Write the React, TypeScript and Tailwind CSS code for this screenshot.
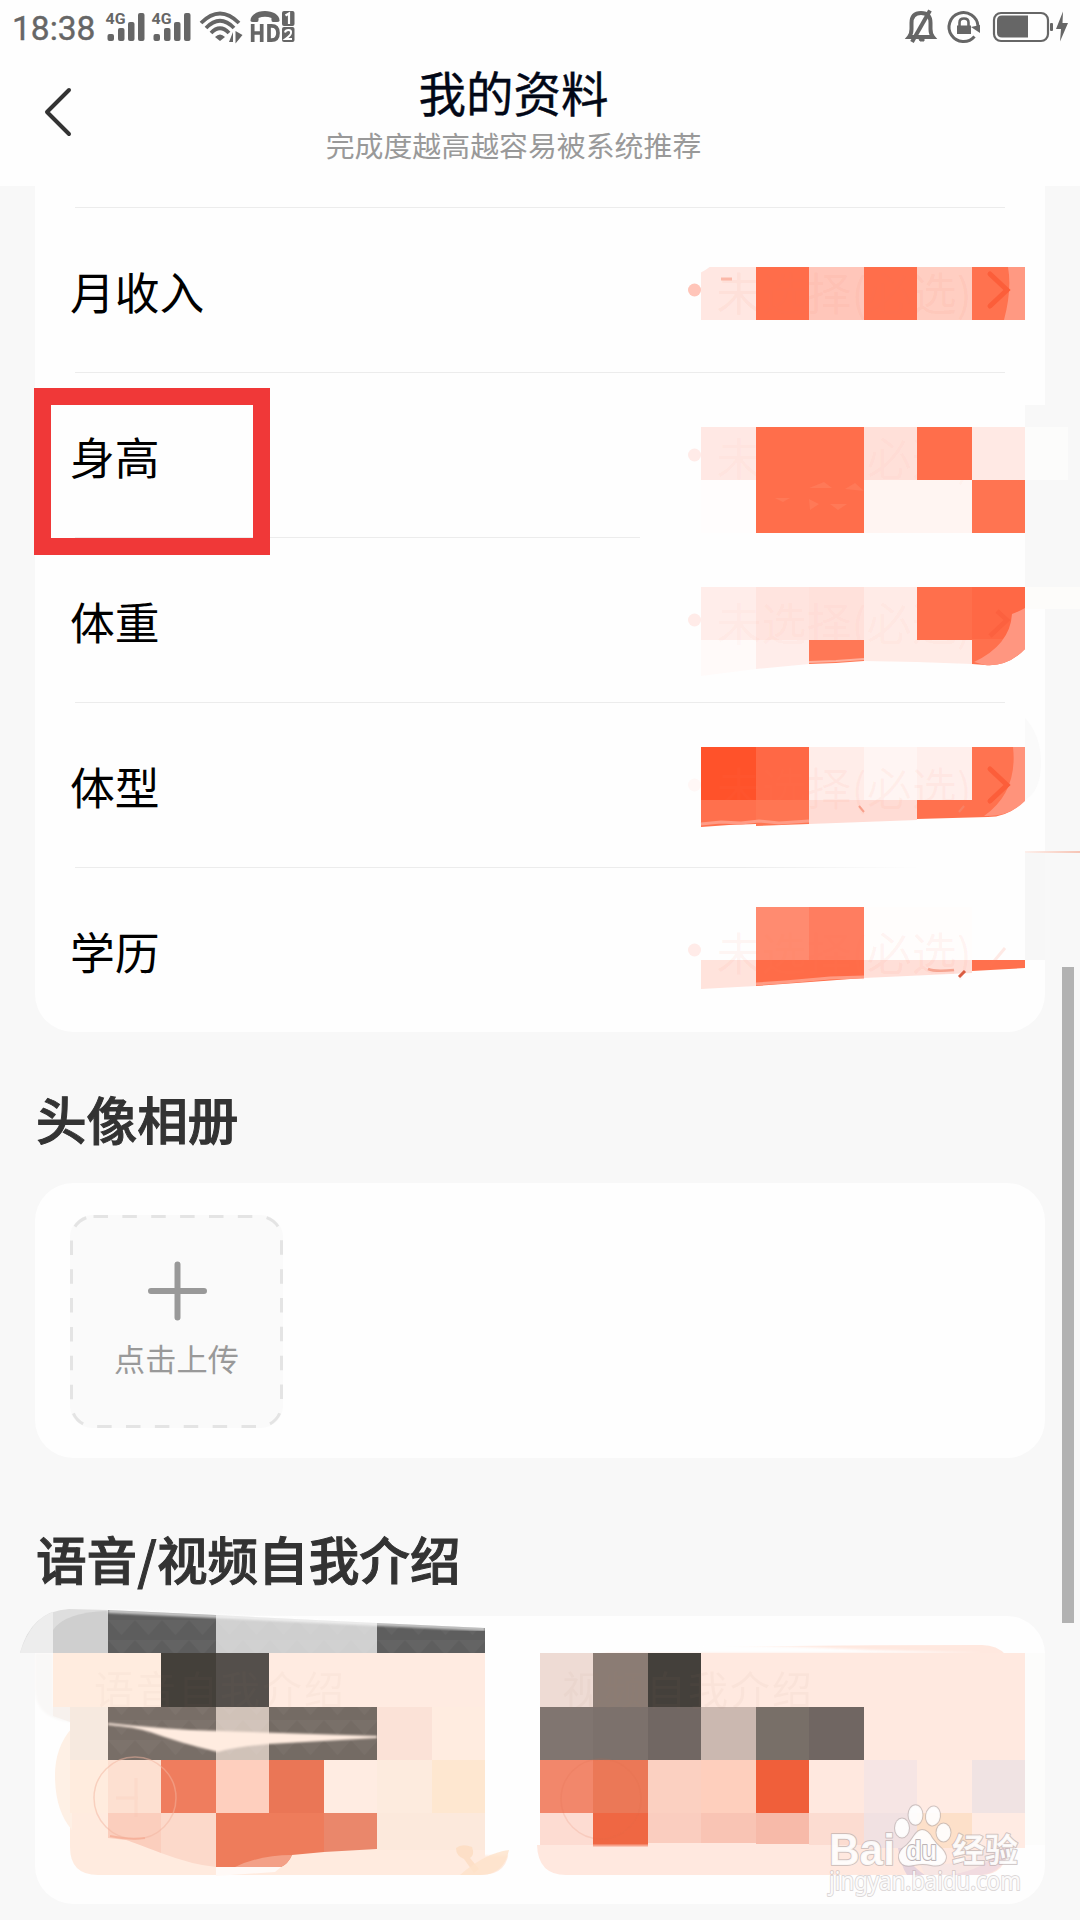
import React from "react";

type Cell = [number, number, number, number, string];

const FONT = "font-['Noto_Sans_CJK_SC','Noto_Sans',sans-serif]";

/* Pixelated cells, given as left, top, right, bottom and colour in page units. */
function Cells({ cells }: { cells: Cell[] }) {
  return (
    <>
      {cells.map(([l, t, r, b, c], i) => (
        <rect key={i} x={l} y={t} width={r - l} height={b - t} fill={c} />
      ))}
    </>
  );
}

function Signal() {
  return (
    <svg width="40" height="32" viewBox="105 11 40 32" fill="#666">
      <text x="105.5" y="24" fontSize="14.500" fontWeight="700" fontFamily="Roboto, sans-serif" textLength="20" lengthAdjust="spacingAndGlyphs">4G</text>
      <rect x="107.5" y="34" width="6.5" height="7" rx="2" />
      <rect x="118" y="28" width="6.5" height="13" rx="2" />
      <rect x="128" y="22" width="6.5" height="19" rx="2" />
      <rect x="138" y="13" width="6.5" height="28" rx="2" />
    </svg>
  );
}

function StatusBar() {
  return (
    <div className="flex h-14 items-start justify-between text-[#666]">
      <div className="flex items-start">
        <span className="ml-3 mt-[9px] w-[93px] text-[33.5px] leading-10 font-['Roboto'] [-webkit-text-stroke:0.4px_#666]">18:38</span>
        <div className="mt-[11px] flex gap-1.5">
          <Signal />
          <Signal />
        </div>
        <svg className="ml-2 mt-[10px]" width="45" height="34" viewBox="199 10 45 34" fill="none" stroke="#666" strokeWidth="3.8">
          <path d="M201 23 Q220 4 239 23" />
          <path d="M206 28 Q220 13.500 234 28" />
          <path d="M211 33 Q220 23.500 229 33" />
          <path d="M215 37 Q220 32 225 37 L220 41Z" fill="#666" stroke="none" />
          <path d="M229 42 L233 42 V32Z M235.500 31 V43.500 L242.500 35Z" fill="#666" stroke="none" />
        </svg>
        <svg className="ml-1.5 mt-[10px]" width="45" height="34" viewBox="250 10 45 34" fill="#666">
          <path d="M250.500 21 C250 15 257 11 265 11 S280 15 279.500 21 Q279 22 277 22 H273 Q271 22 271.500 18 Q265 15.500 258.500 18 Q259 22 257 22 H253 Q251 22 250.500 21Z" />
          <path d="M252.700 24 V42 M261.700 24 V42 M252.700 33 H261.700 M269 25.800 V40.200 H271.500 Q278 40.200 278 33 T271.500 25.800 Z" fill="none" stroke="#666" strokeWidth="3.700" />
          <rect x="282" y="11" width="12.500" height="15" rx="2" />
          <rect x="282" y="27" width="12.500" height="15" rx="2" />
          <path d="M285.500 15.500 L289 13.500 V24" fill="none" stroke="#fff" strokeWidth="2.200" />
          <path d="M285 32.500 Q285.500 30 288.500 30 T291 33 Q291 35 285.500 39 H292" fill="none" stroke="#fff" strokeWidth="2" />
        </svg>
      </div>
      <svg className="mr-2 mt-[9px]" width="168" height="36" viewBox="904 9 168 36" fill="none" stroke="#666">
        <path d="M909 37 H933 Q930.500 34 930.500 29 V23 Q930.500 13 921 13 T911.500 23 V29 Q911.500 34 909 37Z" strokeWidth="4" />
        <path d="M930 10.500 L912 42" strokeWidth="4" />
        <path d="M919 39 h5 v2 h-4z" fill="#666" strokeWidth="1" />
        <path d="M974.500 36.500 A14.500 14.500 0 1 1 978 26" strokeWidth="3" />
        <path d="M971 27 L980 25 V33Z" fill="#666" stroke="none" />
        <rect x="957" y="25.500" width="14" height="8.500" fill="#666" stroke="none" />
        <path d="M959.500 26 V22.500 Q959.500 18.500 964 18.500 T968.500 22.500 V26" strokeWidth="2.600" />
        <rect x="994" y="13" width="54" height="28" rx="7" strokeWidth="2.200" />
        <path d="M1002 15.500 H1028 V37.500 H1002 Q997 37.500 997 32.500 V20.500 Q997 15.500 1002 15.500Z" fill="#666" stroke="none" />
        <rect x="1050" y="23" width="3" height="8" rx="1" fill="#666" stroke="none" />
        <path d="M1063 11.500 L1056 29 H1061 L1060 41.500 L1068 23 H1062.500Z" fill="#666" stroke="none" />
      </svg>
    </div>
  );
}

function Header() {
  return (
    <header className="h-[186px] bg-[#fefefe]">
      <StatusBar />
      <div className="flex items-start">
        <svg className="ml-[43px] mt-[30px] shrink-0" width="30" height="52" viewBox="43 86 30 52" fill="none" stroke="#333" strokeWidth="4" strokeLinecap="round" strokeLinejoin="round">
          <path d="M69 90 L47 112 L69 134" />
        </svg>
        <div className="ml-[200px] flex w-[481px] flex-col items-center pt-2.5">
          <h1 className="text-[47.5px] leading-[52px] text-[#020817] [-webkit-text-stroke:0.4px_#020817]">我的资料</h1>
          <p className="mt-2 text-[28.900px] leading-9 text-[#999]">完成度越高越容易被系统推荐</p>
        </div>
      </div>
    </header>
  );
}

interface RowProps {
  label: string;
  top: number;
  dot: string;
  cells: Cell[];
  valueClass: string;
  last?: boolean;
  children?: React.ReactNode;
}

function Row({ label, top, dot, cells, valueClass, last, children }: RowProps) {
  return (
    <div className="relative mx-10 flex h-[165px] items-center justify-between">
      <span className="-ml-[5px] pt-0.5 text-[44.800px] leading-none text-black">{label}</span>
      <svg className="pointer-events-none absolute -left-[75px] top-0 overflow-visible" width="1080" height="165" viewBox={`0 ${top} 1080 165`}>
        <circle cx="694.5" cy={top + 82} r="6.500" fill={dot} />
        <Cells cells={cells} />
        {children}
      </svg>
      <span className={`relative mr-[33px] pt-0.5 text-[45px] leading-none ${valueClass}`}>未选择(必选)</span>
      {!last && <i className="absolute inset-x-0 bottom-0 h-px bg-[#ececec]" />}
    </div>
  );
}

function Arrow({ y, color }: { y: number; color: string }) {
  return <path d={`M990 ${y - 16} L1007 ${y} L990 ${y + 16}`} fill="none" stroke={color} strokeWidth="5" strokeLinecap="round" />;
}

function ProfileCard() {
  return (
    <section className="relative mx-[35px] h-[846px] rounded-b-[38px] bg-[#fefefe] pt-[22px]">
      <i className="absolute inset-x-10 top-[21px] h-px bg-[#ececec]" />
      <Row
        label="月收入" top={208} dot="#ffc5b9" valueClass="text-[#f97b5b]/8"
        cells={[[701, 267, 756, 320, "#ffe7e2"], [756, 267, 809, 320, "#ff6d4a"], [809, 267, 864, 320, "#ffc6ba"], [864, 267, 917, 320, "#ff6e4b"], [917, 267, 972, 320, "#ffcec2"], [972, 267, 1025, 320, "#ff724f"]]}
      >
        <path d="M1008 267 H1025 V320 H1004 Q1012 290 1008 267Z" fill="#ff9982" />
        <path d="M700 266 H711 Q706 270 700 273Z" fill="#fefefe" />
        <path d="M721 279 H732" stroke="#fbb8a8" strokeWidth="3" />
        <Arrow y={290} color="#fc5e3a" />
      </Row>
      <Row
        label="身高" top={373} dot="#ffebe8" valueClass="text-[#ff7c5c]/4"
        cells={[[1025, 405, 1045, 587, "#f8f8f8"], [1025, 427, 1068, 480, "#fcfcfb"], [701, 427, 756, 480, "#ffe8e4"], [756, 427, 864, 533, "#ff6e4b"], [864, 427, 917, 480, "#ffe0d9"], [917, 427, 972, 480, "#ff6e4b"], [972, 427, 1025, 480, "#ffe9e4"], [701, 480, 756, 533, "#fffdfd"], [864, 480, 972, 533, "#fff5f2"], [972, 480, 1025, 533, "#ff7451"]]}
      >
        <path d="M809 488 l15-6 8 6z M845 489 l10-6 9 8z M809 499 l10 5-9 6z M830 504 l8 6 9-6z M775 498 l8 4 7-4z" fill="#ff8363" opacity=".5" />
      </Row>
      <Row
        label="体重" top={538} dot="#ffebe8" valueClass="text-[#ff7c5c]/5"
        cells={[[640, 537, 1005, 538, "#fefefe"], [1025, 587, 1080, 609, "#fdfcfa"], [701, 587, 756, 640, "#ffedea"], [756, 587, 809, 640, "#ffe4df"], [809, 587, 864, 640, "#ffe1db"], [864, 587, 917, 640, "#ffebe7"], [917, 587, 972, 640, "#ff6f4c"], [972, 587, 1025, 640, "#ff6845"]]}
      >
        <rect x="640" y="536" width="370" height="3" fill="#fefefe" />
        <path d="M701 640 H756 V669 L701 676Z" fill="#fffaf9" />
        <path d="M756 640 H809 V664 L756 669Z" fill="#ffedea" />
        <path d="M809 640 H864 V661 L836 663 L809 664Z" fill="#ff7856" />
        <path d="M809 662 L836 661 L864 659" stroke="#ffb09d" strokeWidth="2" fill="none" />
        <path d="M864 640 H972 V664 L917 662 L864 661Z" fill="#ffebe6" />
        <path d="M972 639 H1025 V649 Q1008 667 985 665 L972 664Z" fill="#ff704d" />
        <path d="M1012 614 Q1020 611 1025 608 V649 Q1008 667 985 665 L974 662 Q1010 645 1012 614Z" fill="#ff9680" />
        <path d="M997 611 L1007 620 L990 636" fill="none" stroke="#fc613f" strokeWidth="4.500" />
      </Row>
      <Row
        label="体型" top={703} dot="#fff7f6" valueClass="text-[#ff7c5c]/6"
        cells={[[701, 747, 756, 800, "#ff522a"], [756, 747, 809, 800, "#ff6845"], [809, 747, 864, 800, "#ffede9"], [864, 747, 917, 800, "#fff5f3"], [917, 747, 972, 800, "#ffefec"], [972, 747, 1025, 800, "#ff7350"]]}
      >
        <path d="M1025 718 Q1041 735 1041 763 T1025 800Z" fill="#fafafa" />
        <path d="M701 800 H756 V824 L729 825 L701 827Z" fill="#ff704d" />
        <path d="M756 800 H809 V824 L782 825 L756 826Z" fill="#ff7653" />
        <path d="M701 824 l20-2 20 1 18-2 20 2 30-2" fill="none" stroke="#ff9b85" strokeWidth="3" />
        <path d="M809 800 H917 V820 L809 824Z" fill="#ffdcd5" />
        <path d="M917 800 H1025 Q1009 817 988 817 L917 819Z" fill="#ff714e" />
        <path d="M1013 747 H1025 V801 Q1009 817 984 816 Q1018 792 1013 747Z" fill="#ff937b" />
        <path d="M859 806 L864 812 M964 806 L959 812" stroke="#f58a70" strokeWidth="2" opacity=".7" />
        <Arrow y={785} color="#fc5e3a" />
      </Row>
      <Row
        label="学历" top={868} dot="#ffebe8" valueClass="text-[#ff7c5c]/7" last
        cells={[[1025, 852, 1045, 960, "#f7f7f7"], [756, 907, 809, 960, "#ff8b70"], [809, 907, 864, 960, "#ff7d60"], [864, 907, 972, 960, "#fffdfc"]]}
      >
        <defs>
          <linearGradient id="fadeLine"><stop offset="0" stopColor="#fdf0ec" /><stop offset="1" stopColor="#f6c4b5" /></linearGradient>
          <linearGradient id="fadeRule"><stop offset="0" stopColor="#fefefe" stopOpacity="0" /><stop offset="1" stopColor="#fefefe" /></linearGradient>
        </defs>
        <rect x="740" y="866" width="180" height="3" fill="url(#fadeRule)" />
        <rect x="920" y="866" width="90" height="3" fill="#fefefe" />
        <rect x="1025" y="851" width="55" height="2" fill="url(#fadeLine)" />
        <path d="M701 960 H756 V986 L701 989Z" fill="#ffe3dc" />
        <path d="M756 960 H864 V978 L810 982 L756 986Z" fill="#ff6c48" />
        <path d="M756 984 L785 982 L830 978 L864 977" fill="none" stroke="#ff9b83" strokeWidth="3" />
        <path d="M864 960 H972 V973 L864 978Z" fill="#ffdfd8" />
        <path d="M972 960 H1025 V968 L972 971Z" fill="#ff704d" />
        <path d="M1005 948 L990 966" stroke="#ff795a" strokeWidth="3" opacity=".15" />
        <path d="M928 969 Q935 972 954 970" fill="none" stroke="#f6a693" strokeWidth="2.500" />
        <path d="M965 971 L959 977" stroke="#d85a40" strokeWidth="3" />
      </Row>
      <div className="absolute -left-px top-[202px] h-[167px] w-[236px] border-[17.5px] border-[#f03838]" />
    </section>
  );
}

function UploadBox() {
  return (
    <div className="relative flex size-[213px] flex-col items-center rounded-[22px] bg-[#fafafa] pt-[46px]">
      <svg className="absolute inset-0" width="213" height="213" fill="none" stroke="#e4e4e4" strokeWidth="3">
        <rect x="1.500" y="1.500" width="210" height="210" rx="22" strokeDasharray="14.500 14.370" />
      </svg>
      <svg width="60" height="60" viewBox="0 0 60 60" stroke="#999" strokeWidth="6" strokeLinecap="round">
        <path d="M30.500 3.500 V56.500 M4 30 H57" />
      </svg>
      <span className="mt-[19px] text-[31.200px] leading-9 text-[#999]">点击上传</span>
    </div>
  );
}

function VoiceArt() {
  const cells: Cell[] = [
    [53, 1653, 108, 1707, "#ffecdf"], [108, 1653, 161, 1707, "#ffecdf"], [161, 1653, 216, 1707, "#44403a"], [216, 1653, 269, 1707, "#544f4b"], [269, 1653, 485, 1707, "#ffebe1"],
    [70, 1707, 108, 1760, "#f6e9df"], [108, 1707, 216, 1760, "#786e67"], [216, 1707, 269, 1760, "#d0c2b8"], [269, 1707, 377, 1760, "#746b64"], [377, 1707, 432, 1760, "#fbe2d7"], [432, 1707, 485, 1760, "#ffece0"],
    [70, 1760, 108, 1813, "#ffecde"], [108, 1760, 161, 1813, "#fde0d1"], [161, 1760, 216, 1813, "#ef7d5e"], [216, 1760, 269, 1813, "#fecfbe"], [269, 1760, 324, 1813, "#ea7656"], [324, 1760, 377, 1813, "#ffece2"], [377, 1760, 432, 1813, "#fdebde"], [432, 1760, 485, 1813, "#fee7d0"],
    [377, 1813, 485, 1850, "#fce9dc"],
  ];
  return (
    <svg className="absolute -left-[35px] -top-4 overflow-visible" width="520" height="320" viewBox="0 1600 520 320">
      <defs>
        <pattern id="facet" width="27" height="20" patternUnits="userSpaceOnUse">
          <path d="M0 0 L13.500 15 L27 0Z" fill="#fff" opacity=".035" />
        </pattern>
        <filter id="soft"><feGaussianBlur stdDeviation="1.200" /></filter>
        <linearGradient id="veil" x1="0" y1="0" x2="0" y2="1"><stop offset="0" stopColor="#fefefe" /><stop offset=".75" stopColor="#fefefe" /><stop offset="1" stopColor="#fefefe" stopOpacity="0" /></linearGradient>
      </defs>
      <path d="M70 1653 H485 V1847 H509 Q509 1875 481 1875 H98 Q70 1875 70 1847Z" fill="#ffebdf" />
      <rect x="485" y="1845" width="26" height="12" fill="url(#veil)" />
      <path d="M35 1653 H53 V1707 L70 1717 V1722 Q36 1718 35 1690Z" fill="#f9f8f7" filter="url(#soft)" />
      <path d="M53 1705 H70 V1722 L53 1716Z" fill="#f7f1ed" />
      <path d="M72 1728 Q54 1748 55 1779 Q56 1812 72 1830Z" fill="#fef0e5" />
      <path d="M20 1653 Q31 1611 69 1609 L108 1610 V1653Z" fill="#dedede" />
      <path d="M20 1653 Q31 1619 53 1612 V1653Z" fill="#ededed" />
      <path d="M53 1653 V1630 Q65 1612 108 1611 V1653Z" fill="#cfcfcf" />
      <path d="M108 1610 L216 1615 V1653 H108Z" fill="#5d5d5d" />
      <path d="M216 1615 L377 1623 V1653 H216Z" fill="#cfcfcf" />
      <path d="M377 1623 L485 1628 V1653 H377Z" fill="#5e5e5e" />
      <path d="M108 1613 L485 1631 V1653 H108Z" fill="url(#facet)" />
      <path d="M108 1611 L485 1629" stroke="#fff" strokeWidth="4" opacity=".65" filter="url(#soft)" />
      <Cells cells={cells} />
      <rect x="108" y="1707" width="269" height="53" fill="url(#facet)" />
      <path d="M108 1723 Q145 1727 190 1730 L377 1736 V1738 L269 1744 Q235 1747 218 1752 Q180 1743 150 1732 Q135 1727 108 1725Z" fill="#ffece0" filter="url(#soft)" />
      <path d="M108 1813 H161 V1853 Q135 1843 126 1840 L108 1838Z" fill="#fbcebd" />
      <path d="M161 1813 H216 V1867 Q193 1865 161 1853Z" fill="#fcd9ca" />
      <path d="M216 1813 H324 V1852 L292 1855 Q288 1864 281 1867 H216Z" fill="#ee7c5b" />
      <path d="M324 1813 H377 V1849 L324 1852Z" fill="#ea876b" />
      <path d="M235 1867 Q260 1855 292 1855 Q288 1864 281 1867Z" fill="#f3a087" />
      <path d="M216 1867 H281 L275 1872 L216 1876Z" fill="#fff9f6" />
      <g fill="none" stroke="#f3b5a0" strokeWidth="1.500" opacity=".5">
        <circle cx="135" cy="1798" r="41" />
        <path d="M116 1798 H138 M136 1778 V1817" strokeWidth="3" opacity=".3" />
      </g>
      <path d="M110 1836 Q128 1840 145 1838" fill="none" stroke="#f5aa91" strokeWidth="2" opacity=".7" />
      <path d="M456 1848 Q462 1843 472 1847 Q475 1855 470 1858 L479 1869 L474 1873 L464 1859 Q456 1856 456 1848Z" fill="#fcdcc0" opacity=".8" />
      <path d="M509 1850 Q504 1875 480 1875 H460 Q485 1853 509 1850Z" fill="#fee2c9" opacity=".8" />
      <text x="94" y="1705" fontSize="40" textLength="250" fill="#ad806c" opacity=".04">语音自我介绍</text>
    </svg>
  );
}

function Watermark() {
  return (
    <g fill="#fff" fillOpacity=".9" stroke="#b3a8a8" strokeOpacity=".6" strokeWidth="2" paintOrder="stroke" strokeLinejoin="round">
      <text x="829" y="1865" fontSize="44" fontWeight="700" fontFamily="Liberation Sans, sans-serif" textLength="66" lengthAdjust="spacingAndGlyphs">Bai</text>
      <ellipse cx="902" cy="1828" rx="7" ry="9.500" />
      <ellipse cx="915.5" cy="1815" rx="7" ry="9.800" />
      <ellipse cx="933" cy="1816" rx="7" ry="9.500" transform="rotate(8 933 1816)" />
      <ellipse cx="943.5" cy="1832.500" rx="7" ry="9" />
      <path d="M922 1830 Q928 1830 932 1838 Q936 1844 942 1849 Q948 1856 945 1861 Q941 1867 931 1865 Q923 1863 914 1865 Q901 1868 899 1858 Q898 1851 907 1845 Q911 1841 914 1836 Q918 1830 922 1830Z" />
      <text x="906" y="1860" fontSize="27" fontWeight="700" fontFamily="Liberation Sans, sans-serif" textLength="31" lengthAdjust="spacingAndGlyphs" stroke="#aaa0a3" strokeOpacity=".8">du</text>
      <text x="952" y="1862" fontSize="33" fontWeight="700" textLength="66">经验</text>
      <text x="829" y="1890" fontSize="25" fontFamily="Noto Sans, sans-serif" textLength="192" lengthAdjust="spacingAndGlyphs" strokeOpacity=".45">jingyan.baidu.com</text>
    </g>
  );
}

function VideoArt() {
  const cells: Cell[] = [
    [540, 1653, 593, 1707, "#eedbd4"], [593, 1653, 648, 1707, "#8b7c74"], [648, 1653, 701, 1707, "#44403b"], [701, 1653, 1025, 1760, "#ffe9e0"],
    [540, 1707, 593, 1760, "#807570"], [593, 1707, 648, 1760, "#7c716c"], [648, 1707, 701, 1760, "#716763"], [701, 1707, 756, 1760, "#cbb8b0"], [756, 1707, 809, 1760, "#786f68"], [809, 1707, 864, 1760, "#706662"],
    [540, 1760, 593, 1813, "#f2876b"], [593, 1760, 648, 1813, "#eb7857"], [648, 1760, 701, 1813, "#fbd0c1"], [701, 1760, 756, 1813, "#fecfbd"], [756, 1760, 809, 1813, "#f05f3a"], [809, 1760, 864, 1813, "#ffe8df"], [864, 1760, 917, 1813, "#f6e5e4"], [917, 1760, 972, 1813, "#ffebe3"], [972, 1760, 1025, 1813, "#f0e3e3"],
    [540, 1813, 593, 1845, "#fddcd2"], [593, 1813, 648, 1845, "#ef6743"], [648, 1813, 701, 1843, "#facdbf"], [701, 1813, 756, 1843, "#f9c4b4"], [756, 1813, 809, 1844, "#f7baa9"], [809, 1813, 864, 1845, "#fcdcd1"], [864, 1813, 917, 1848, "#f1e1e2"], [917, 1813, 972, 1848, "#fde0c9"], [972, 1813, 1025, 1848, "#ffebe3"],
  ];
  return (
    <svg className="absolute -top-4 left-[485px] overflow-visible" width="560" height="320" viewBox="520 1600 560 320">
      <path d="M640 1648 Q820 1645 982 1645 Q997 1645 1006 1655 V1845 H1010 Q1006 1875 981 1875 H566 Q538 1875 537 1845 H600 V1653Z" fill="#ffe8df" />
      <path d="M600 1644 Q760 1644 870 1650 L982 1653 H590Z" fill="#fefefe" filter="url(#soft)" />
      <path d="M1025 1653 H1045 V1845 H1025Z" fill="#fcfcfb" />
      <Cells cells={cells} />
      <path d="M593 1845.500 H648" stroke="#f7a28b" strokeWidth="2" />
      <path d="M898 1848 Q901 1866 907 1875 H925 Q905 1862 907 1848Z" fill="#e5d2dc" />
      <path d="M913 1848 Q938 1880 985 1848 L1010 1848 Q1004 1870 981 1875 H925Z" fill="#f7e6e4" />
      <path d="M1002 1848 Q985 1870 950 1875 H981 Q1004 1873 1010 1848Z" fill="#eed6de" opacity=".7" />
      <circle cx="601" cy="1799" r="40" fill="none" stroke="#e0694b" strokeWidth="1.500" opacity=".15" />
      <text x="562" y="1705" fontSize="40" textLength="250" fill="#ad806c" opacity=".05">视频自我介绍</text>
      <Watermark />
    </svg>
  );
}

export default function App() {
  return (
    <main className={`relative h-[1920px] w-[1080px] overflow-hidden bg-[#f8f8f8] ${FONT}`}>
      <Header />
      <ProfileCard />
      <h2 className="ml-9 mt-[55px] text-[50.600px] leading-[62px] font-medium text-[#333] [-webkit-text-stroke:1px_#333]">头像相册</h2>
      <section className="mx-[35px] mt-[34px] h-[275px] rounded-[38px] bg-[#fefefe] pl-[35px] pt-8">
        <UploadBox />
      </section>
      <h2 className="ml-9 mt-[69px] text-[50.600px] leading-[62px] font-medium text-[#333] [-webkit-text-stroke:1px_#333]">语音/视频自我介绍</h2>
      <section className="relative mx-[35px] mt-[27px] h-[288px] rounded-[38px] bg-[#fefefe]">
        <VoiceArt />
        <VideoArt />
      </section>
      <div className="absolute right-1.5 top-[967px] h-[656px] w-3 bg-[#b2b2b2]" />
    </main>
  );
}
